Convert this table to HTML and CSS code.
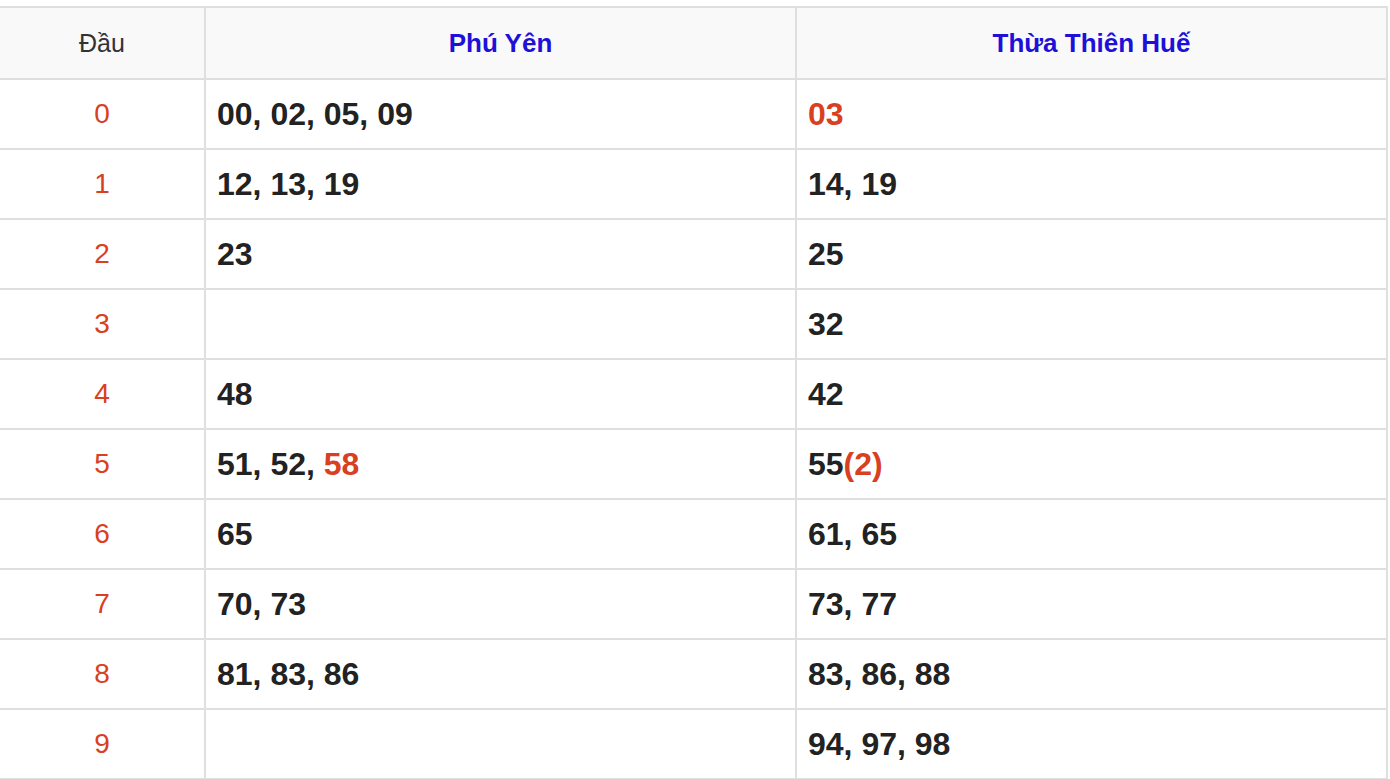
FILE: index.html
```html
<!DOCTYPE html>
<html lang="vi">
<head>
<meta charset="utf-8">
<title>Lô tô đầu</title>
<link rel="stylesheet" href="styles.css">
</head>
<body>
<div class="table">
  <div class="cell head idx">Đầu</div>
  <div class="cell head prov">Phú Yên</div>
  <div class="cell head prov">Thừa Thiên Huế</div>

  <div class="cell idx">0</div>
  <div class="cell val"><span>00, 02, 05, 09</span></div>
  <div class="cell val"><span><span class="hot">03</span></span></div>

  <div class="cell idx">1</div>
  <div class="cell val"><span>12, 13, 19</span></div>
  <div class="cell val"><span>14, 19</span></div>

  <div class="cell idx">2</div>
  <div class="cell val"><span>23</span></div>
  <div class="cell val"><span>25</span></div>

  <div class="cell idx">3</div>
  <div class="cell val"></div>
  <div class="cell val"><span>32</span></div>

  <div class="cell idx">4</div>
  <div class="cell val"><span>48</span></div>
  <div class="cell val"><span>42</span></div>

  <div class="cell idx">5</div>
  <div class="cell val"><span>51, 52, <span class="hot">58</span></span></div>
  <div class="cell val"><span>55<span class="hot">(2)</span></span></div>

  <div class="cell idx">6</div>
  <div class="cell val"><span>65</span></div>
  <div class="cell val"><span>61, 65</span></div>

  <div class="cell idx">7</div>
  <div class="cell val"><span>70, 73</span></div>
  <div class="cell val"><span>73, 77</span></div>

  <div class="cell idx">8</div>
  <div class="cell val"><span>81, 83, 86</span></div>
  <div class="cell val"><span>83, 86, 88</span></div>

  <div class="cell idx">9</div>
  <div class="cell val"></div>
  <div class="cell val"><span>94, 97, 98</span></div>
</div>
</body>
</html>
```

FILE: styles.css
```css
html, body {
  margin: 0;
  padding: 0;
  background: #ffffff;
}

body {
  padding-top: 6px;
  font-family: "Liberation Sans", Arial, sans-serif;
  overflow: hidden;
}

.table {
  margin-left: -2px;
  width: 1390px;
  box-sizing: border-box;
  display: grid;
  grid-template-columns: 206px 591px 591px;
  grid-template-rows: 72px repeat(10, 70px);
  border-top: 2px solid #dfdfdf;
  border-left: 2px solid #dfdfdf;
}

.cell {
  box-sizing: border-box;
  border-right: 2px solid #dfdfdf;
  border-bottom: 2px solid #dfdfdf;
  display: flex;
  align-items: center;
  background: #ffffff;
}

.head {
  background: #f9f9f9;
  justify-content: center;
  font-size: 26px;
}

.head.idx {
  color: #333333;
  font-weight: normal;
  font-size: 25px;
}

.head.prov {
  color: #1e10d8;
  font-weight: bold;
}

.idx {
  justify-content: center;
  color: #d8401f;
  font-size: 28px;
}

.val {
  padding-left: 11px;
  color: #222222;
  font-weight: bold;
  font-size: 32px;
}

.hot {
  color: #d8401f;
}
```
